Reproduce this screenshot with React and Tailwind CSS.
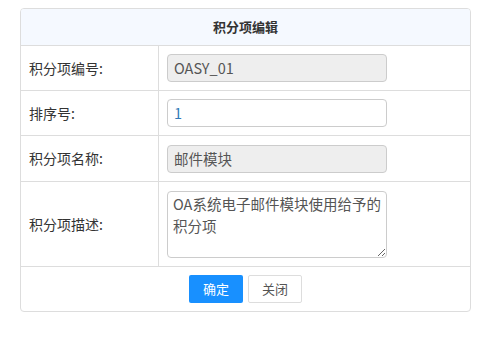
export default function App() {
    const font = { fontFamily: '"Microsoft YaHei", "Noto Sans CJK SC", "Noto Sans", sans-serif' };

    const rows = [
        { label: "积分项编号:", value: "OASY_01", disabled: true, h: "h-[45px]" },
        { label: "排序号:", value: "1", disabled: false, h: "h-[45px]" },
        { label: "积分项名称:", value: "邮件模块", disabled: true, h: "h-[46px]" },
    ];

    return (
        <div className="w-[490px] h-[345px] bg-white pt-2 pl-5" style={font}>
            <div className="w-[451px] border border-[#dddddd] rounded-[4px] overflow-hidden text-[#333333]">
                {/* Header */}
                <div className="h-[37px] bg-[#f5f9ff] border-b border-[#dddddd] flex items-center justify-center text-[13px] font-bold">
                    积分项编辑
                </div>

                {rows.map((row) => (
                    <div key={row.label} className={`flex ${row.h} border-b border-[#dddddd]`}>
                        <div className="w-[138px] border-r border-[#dddddd] flex items-center pl-2 text-[14px]">
                            {row.label}
                        </div>
                        <div className="flex-1 flex items-center pl-2">
                            <div
                                className={`w-[220px] h-[28px] rounded-[4px] border border-[#cccccc] flex items-center px-[6px] text-[14.5px] ${row.disabled ? "bg-[#eeeeee] text-[#555555]" : "bg-white text-[#337ab7]"
                                    }`}
                            >
                                {row.value}
                            </div>
                        </div>
                    </div>
                ))}

                {/* Description */}
                <div className="flex h-[85px] border-b border-[#dddddd]">
                    <div className="w-[138px] border-r border-[#dddddd] flex items-center pl-2 text-[14px]">
                        积分项描述:
                    </div>
                    <div className="flex-1 flex items-center pl-2">
                        <textarea
                            readOnly
                            defaultValue="OA系统电子邮件模块使用给予的积分项"
                            className="w-[220px] h-[67px] rounded-[4px] border border-[#cccccc] pl-[5px] pr-0 pt-[1px] text-[14.5px] leading-[22px] text-[#555555] outline-none overflow-hidden"
                            style={font}
                        />
                    </div>
                </div>

                {/* Footer */}
                <div className="h-[44px] flex items-center justify-center gap-[5px]">
                    <button className="w-[54px] h-[28px] rounded-[2px] bg-[#1890ff] text-white text-[13px]">
                        确定
                    </button>
                    <button className="w-[54px] h-[28px] rounded-[2px] bg-white border border-[#dddddd] text-[#555555] text-[13px]">
                        关闭
                    </button>
                </div>
            </div>
        </div>
    );
}
